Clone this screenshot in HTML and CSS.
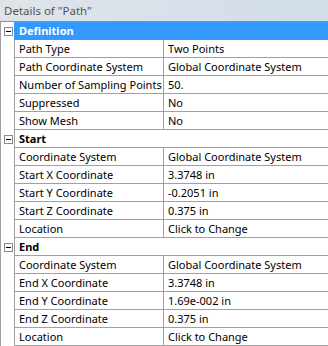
FILE: index.html
```html
<!DOCTYPE html>
<html>
<head>
<meta charset="utf-8">
<link rel="stylesheet" href="styles.css">
</head>
<body>
<div class="panel">
  <div class="title">Details of "Path"</div>
  <div class="grid">
    <div class="gut"><span class="minus"></span></div>
    <div class="sec sec-active">Definition</div>

    <div class="gut"></div><div class="name">Path Type</div><div class="val">Two Points</div>
    <div class="gut"></div><div class="name">Path Coordinate System</div><div class="val">Global Coordinate System</div>
    <div class="gut"></div><div class="name">Number of Sampling Points</div><div class="val">50.</div>
    <div class="gut"></div><div class="name">Suppressed</div><div class="val">No</div>
    <div class="gut"></div><div class="name">Show Mesh</div><div class="val">No</div>

    <div class="gut"><span class="minus"></span></div>
    <div class="sec">Start</div>

    <div class="gut"></div><div class="name">Coordinate System</div><div class="val">Global Coordinate System</div>
    <div class="gut"></div><div class="name">Start X Coordinate</div><div class="val">3.3748 in</div>
    <div class="gut"></div><div class="name">Start Y Coordinate</div><div class="val">-0.2051 in</div>
    <div class="gut"></div><div class="name">Start Z Coordinate</div><div class="val">0.375 in</div>
    <div class="gut"></div><div class="name">Location</div><div class="val">Click to Change</div>

    <div class="gut"><span class="minus"></span></div>
    <div class="sec">End</div>

    <div class="gut"></div><div class="name">Coordinate System</div><div class="val">Global Coordinate System</div>
    <div class="gut"></div><div class="name">End X Coordinate</div><div class="val">3.3748 in</div>
    <div class="gut"></div><div class="name">End Y Coordinate</div><div class="val">1.69e-002 in</div>
    <div class="gut"></div><div class="name">End Z Coordinate</div><div class="val">0.375 in</div>
    <div class="gut"></div><div class="name">Location</div><div class="val">Click to Change</div>
  </div>
</div>
</body>
</html>
```
FILE: styles.css
```css
html, body {
  margin: 0;
  padding: 0;
  background: #ffffff;
}
body {
  font-family: "Noto Sans", "DejaVu Sans", sans-serif;
  font-size: 11px;
  color: #000;
}
.panel {
  width: 328px;
  height: 346px;
  overflow: hidden;
}
.title {
  height: 21px;
  border-bottom: 1px solid #8e9296;
  background: linear-gradient(to right, #dfe4ea, #d2dde8);
  color: #555555;
  font-size: 11.5px;
  line-height: 21px;
  padding-left: 4px;
  box-sizing: content-box;
}
.grid {
  display: grid;
  grid-template-columns: 15px 149px 1fr;
  grid-auto-rows: 18px;
}
.gut {
  border-left: 1px solid #a0a0a0;
  border-right: 1px solid #a0a0a0;
  box-sizing: border-box;
  background: #fff;
  display: flex;
  align-items: center;
}
.name, .val {
  border-bottom: 1px solid #a0a0a0;
  box-sizing: border-box;
  padding-left: 4px;
  line-height: 17px;
  white-space: nowrap;
  overflow: hidden;
}
.name {
  border-right: 1px solid #a0a0a0;
}
.sec {
  grid-column: 2 / 4;
  margin-left: -1px;
  border-bottom: 1px solid #a0a0a0;
  box-sizing: border-box;
  padding-left: 5px;
  font-weight: bold;
  line-height: 17px;
}
.sec-active {
  background: #3399ff;
  color: #fff;
  border-bottom-color: #3399ff;
}
.minus {
  position: relative;
  display: block;
  width: 9px;
  height: 9px;
  margin-left: 3px;
  border: 1px solid #8a8a8a;
  box-sizing: border-box;
  background: #fff;
}
.minus::after {
  content: "";
  position: absolute;
  left: 1px;
  top: 3px;
  width: 5px;
  height: 1px;
  background: #000;
}
```
